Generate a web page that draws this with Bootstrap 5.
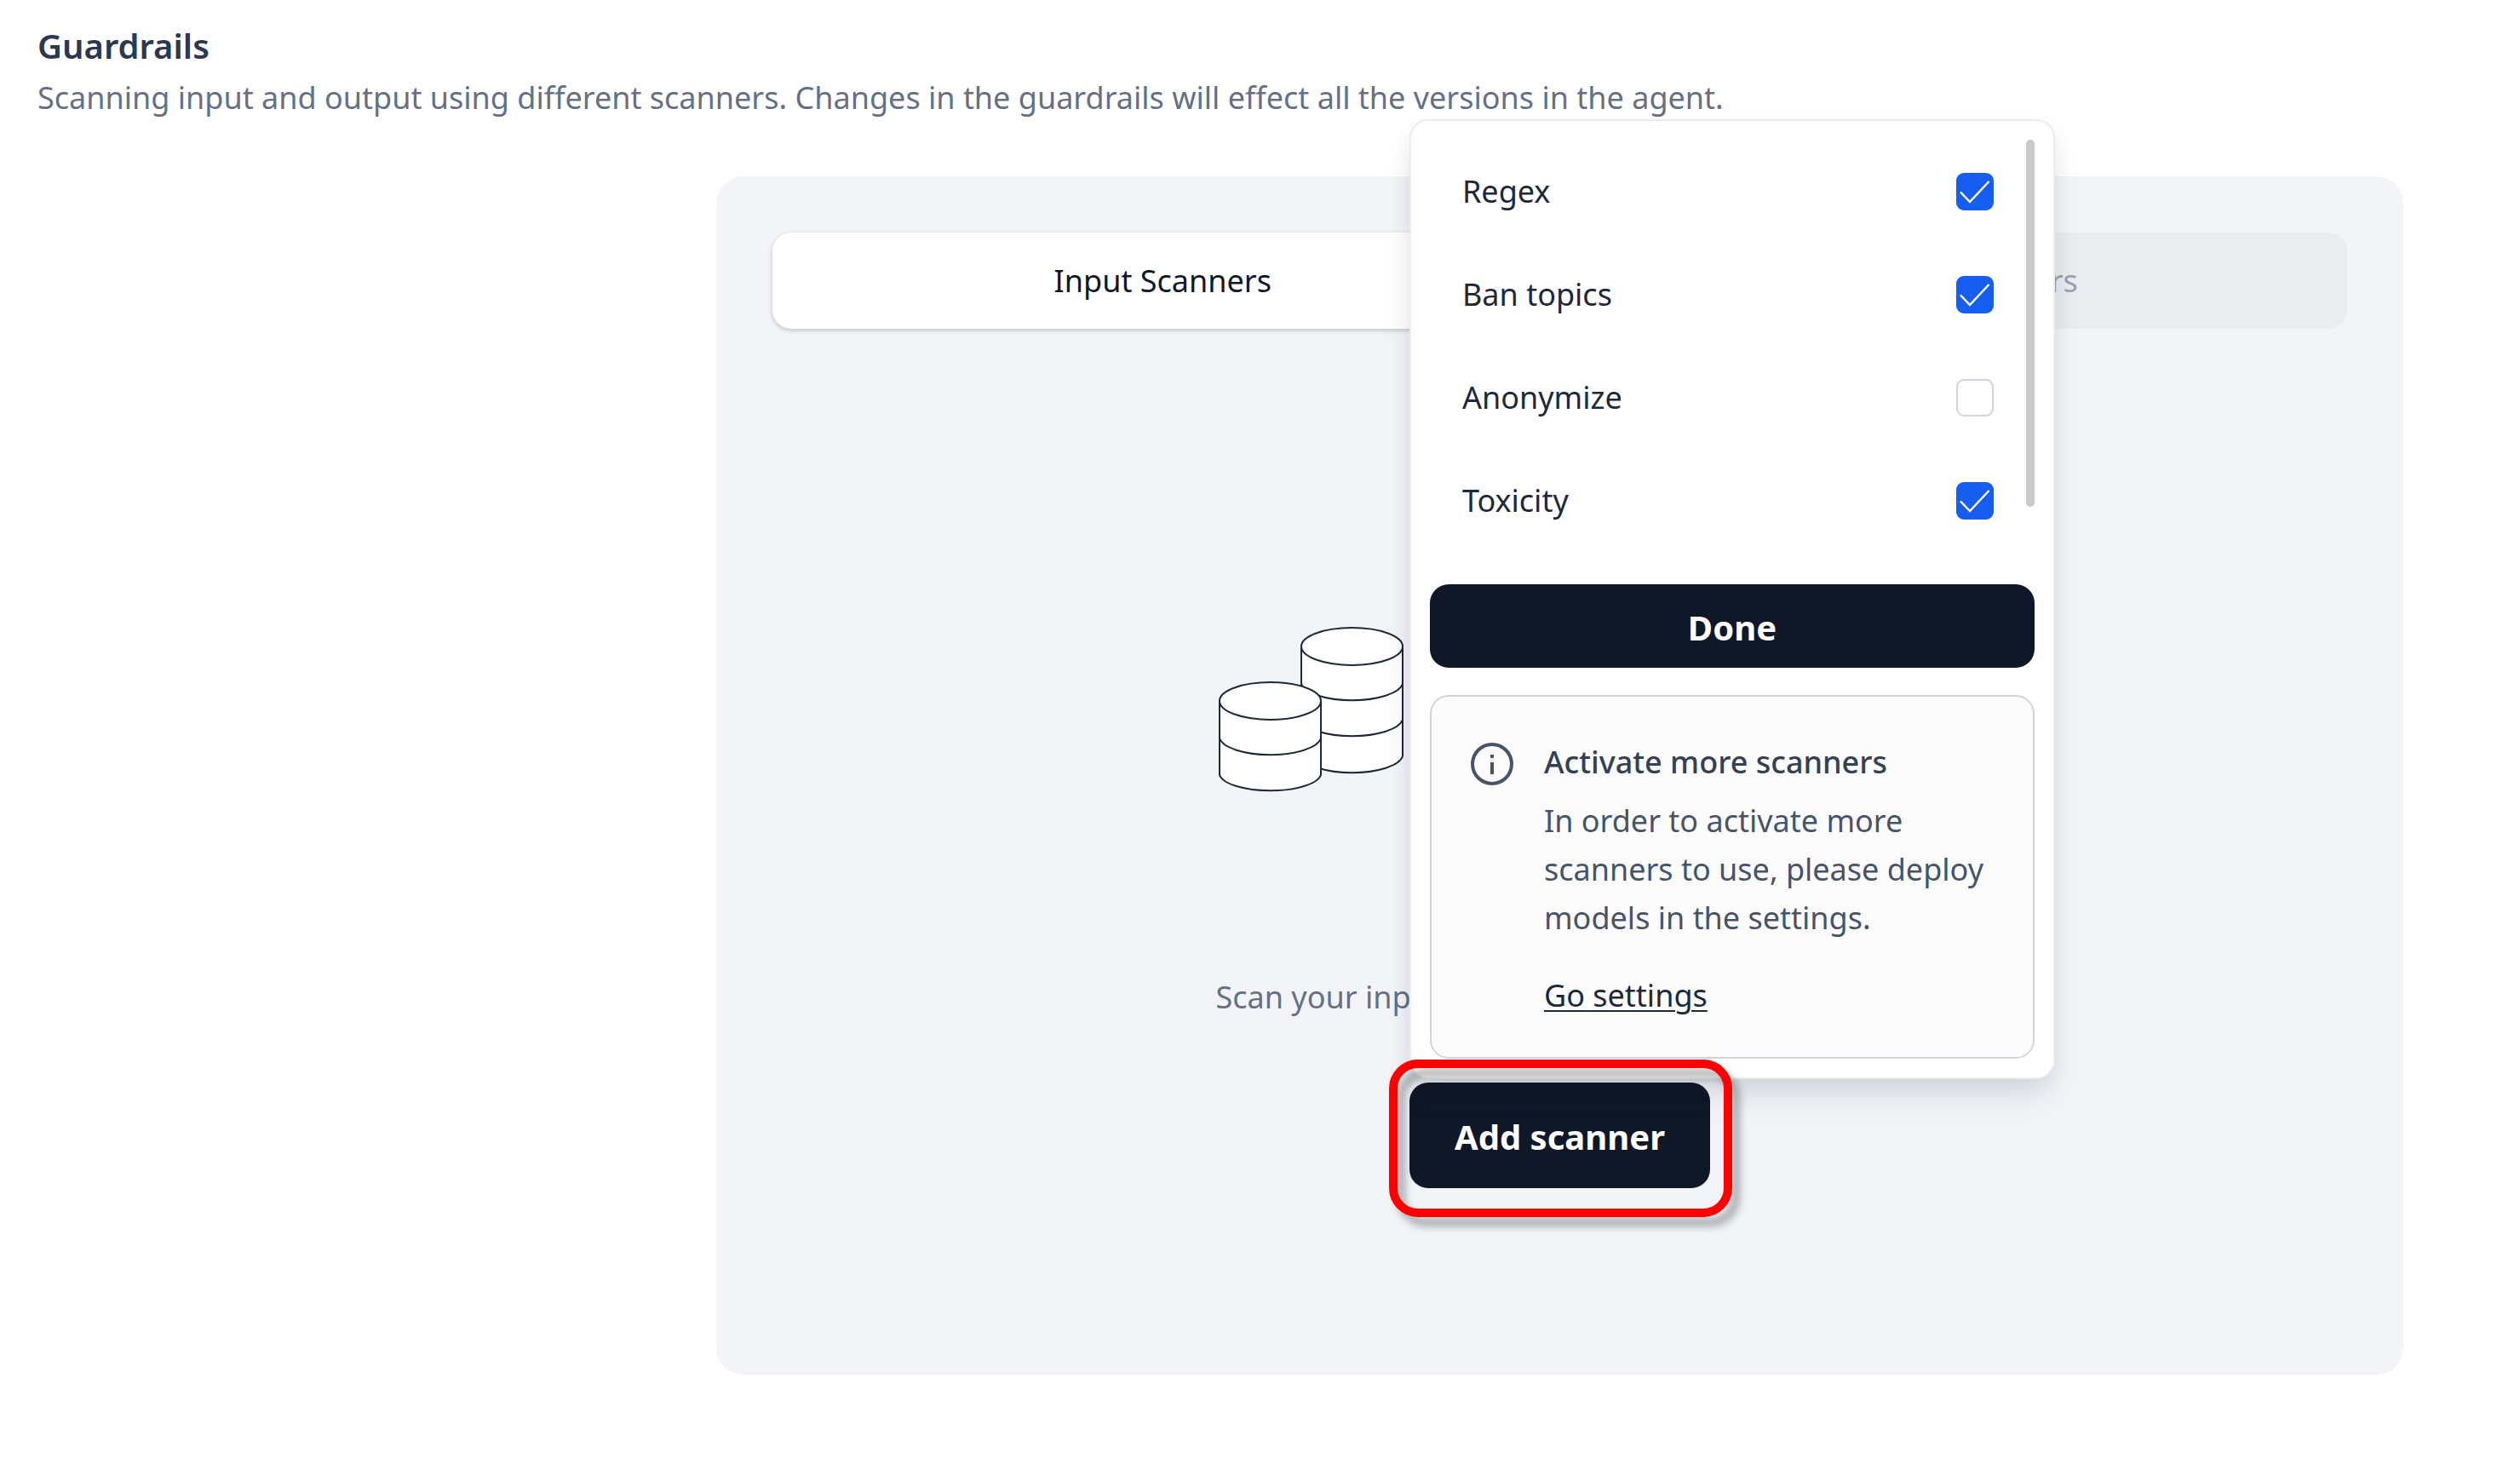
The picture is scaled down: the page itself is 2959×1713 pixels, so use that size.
<!DOCTYPE html>
<html lang="en">
<head>
<meta charset="utf-8">
<meta name="viewport" content="width=device-width, initial-scale=1">
<title>Guardrails</title>
<link href="https://cdn.jsdelivr.net/npm/bootstrap@5.3.0/dist/css/bootstrap.min.css" rel="stylesheet">
<style>
  body { font-family: "Noto Sans", "Open Sans", sans-serif; font-size: 36px; line-height: 54px; color: #344054; background: #fff; }
  .page-head { padding: 24px 44px 0; }
  .page-title { font-size: 40px; line-height: 60px; font-weight: 600; color: #2b3850; }
  .page-desc { color: #667085; }
  .scan-panel { margin: 65px 137px 100px 841px; padding: 66px 66px 219px; background: #f2f4f8; border-radius: 32px; }
  .scan-tabs { gap: 16px; margin-bottom: 348px; }
  .scan-tab { border: 0; border-radius: 22px; height: 113px; background: #eaecf0; color: #98a2b3; }
  .scan-tab.active { background: #fff; color: #101828; box-shadow: 0 2px 6px rgba(16,24,40,.14), 0 2px 4px rgba(16,24,40,.08); }
  .stack-art { width: 804px; height: 200px; margin-bottom: 210px; }
  .empty-text { width: 808px; color: #667085; margin-bottom: 73px; }
  .dark-btn { --bs-btn-bg: #101828; --bs-btn-color: #fff; --bs-btn-hover-bg: #1d2939; --bs-btn-hover-color: #fff; border: 0; border-radius: 22px; font-size: 40px; line-height: 60px; font-weight: 700; }
  .add-btn { padding: 34px 53px 30px; }
  .done-btn { padding: 22px 20px 18px; margin: 32px 0; line-height: 58px; }
  .focus-frame { inset: -27px -26px -34px -24px; border: 10px solid #f00; border-radius: 34px; pointer-events: none; z-index: 3; filter: drop-shadow(9px 11px 5px rgba(0,0,0,.3)); }
  .scan-menu { left: 0; bottom: calc(100% + 4px); width: 758px; padding: 22px; background: #fff; border: 2px solid #eaecf0; border-radius: 22px; box-shadow: 0 24px 40px -8px rgba(16,24,40,.12), 0 8px 24px rgba(16,24,40,.05); z-index: 2; }
  .scan-list { height: 490px; }
  .scan-row { height: 121px; padding: 0 38px; color: #1d2939; }
  .scan-check { width: 44px; height: 44px; margin: 0; border: 2px solid #d0d5dd; border-radius: 10px; }
  .scan-check:checked { background-color: #155eef; border-color: #155eef; background-size: 100% 100%; background-image: url("data:image/svg+xml,%3Csvg xmlns='http://www.w3.org/2000/svg' viewBox='2 2 40 40'%3E%3Cpath d='M5 22.500l11 11.500L38.500 10' fill='none' stroke='%23fff' stroke-width='2.500'/%3E%3C/svg%3E"); }
  .scroll-thumb { width: 10px; height: 431px; border-radius: 5px; background: #c9c9c9; }
  .info-box { gap: 36px; padding: 48px 46px 44px; line-height: 57px; background: #fcfcfd; border: 2px solid #d0d5dd; border-radius: 22px; color: #475467; }
  .info-icon { width: 50px; height: 50px; margin-top: 6px; }
  .info-title { font-size: 36px; line-height: 57px; font-weight: 500; color: #344054; margin-bottom: 12px; }
  .info-text { margin-bottom: 34px; }
  .info-link { color: #1d2939; text-decoration-thickness: 2px; text-underline-offset: 4px; }
</style>
</head>
<body>
<header class="page-head">
  <h1 class="page-title mb-1">Guardrails</h1>
  <p class="page-desc mb-0">Scanning input and output using different scanners. Changes in the guardrails will effect all the versions in the agent.</p>
</header>

<main class="scan-panel d-flex flex-column align-items-center">
  <div class="scan-tabs d-flex w-100" role="tablist">
    <button type="button" class="scan-tab active flex-fill w-50" role="tab" aria-selected="true">Input Scanners</button>
    <button type="button" class="scan-tab flex-fill w-50" role="tab" aria-selected="false">Output Scanners</button>
  </div>

  <svg class="stack-art" viewBox="0 0 804 200" fill="#fff" stroke="#1d2939" stroke-width="2" aria-hidden="true">
    <path d="M98 26v128a60 22 0 0 0 119 0V26"/>
    <ellipse cx="157.500" cy="25" rx="59.500" ry="22"/>
    <path d="M98 69a60 22 0 0 0 119 0M98 111a60 22 0 0 0 119 0" fill="none"/>
    <path d="M2 90v86a60 21 0 0 0 119 0V90"/>
    <ellipse cx="61.500" cy="89" rx="59.500" ry="22"/>
    <path d="M2 133a60 22 0 0 0 119 0" fill="none"/>
  </svg>

  <p class="empty-text">Scan your input</p>

  <div class="position-relative">
    <button type="button" class="btn dark-btn add-btn" aria-expanded="true">Add scanner</button>
    <span class="focus-frame position-absolute"></span>

    <div class="scan-menu position-absolute">
      <div class="scan-list d-flex">
        <div class="flex-grow-1">
          <div class="scan-row d-flex align-items-center justify-content-between">
            <label for="s-regex">Regex</label>
            <input class="form-check-input scan-check" type="checkbox" id="s-regex" checked>
          </div>
          <div class="scan-row d-flex align-items-center justify-content-between">
            <label for="s-topics">Ban topics</label>
            <input class="form-check-input scan-check" type="checkbox" id="s-topics" checked>
          </div>
          <div class="scan-row d-flex align-items-center justify-content-between">
            <label for="s-anon">Anonymize</label>
            <input class="form-check-input scan-check" type="checkbox" id="s-anon">
          </div>
          <div class="scan-row d-flex align-items-center justify-content-between">
            <label for="s-toxic">Toxicity</label>
            <input class="form-check-input scan-check" type="checkbox" id="s-toxic" checked>
          </div>
        </div>
        <div class="scroll-thumb"></div>
      </div>

      <button type="button" class="btn dark-btn done-btn w-100">Done</button>

      <div class="info-box d-flex align-items-start">
        <svg class="info-icon flex-shrink-0" viewBox="0 0 50 50" fill="none" stroke="#475467" aria-hidden="true">
          <circle cx="25" cy="25" r="23" stroke-width="4"/>
          <path d="M25 23v14M25 14v4" stroke-width="4"/>
        </svg>
        <div>
          <h2 class="info-title">Activate more scanners</h2>
          <p class="info-text">In order to activate more scanners to use, please deploy models in the settings.</p>
          <a class="info-link" href="#settings">Go settings</a>
        </div>
      </div>
    </div>
  </div>
</main>
<script src="https://cdn.jsdelivr.net/npm/bootstrap@5.3.0/dist/js/bootstrap.bundle.min.js"></script>
</body>
</html>
